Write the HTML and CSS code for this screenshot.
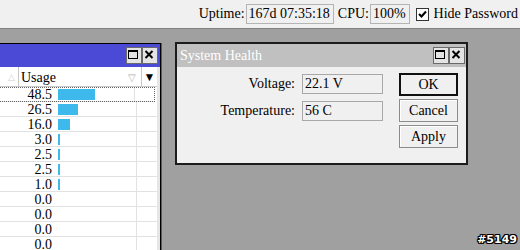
FILE: index.html
```html
<!DOCTYPE html>
<html lang="en">
<head>
  <meta charset="UTF-8" />
  <title>System Health</title>
  <link rel="stylesheet" href="styles.css">
</head>
<body>

<header class="topbar">
  <span class="lbl">Uptime:</span><span class="field">167d 07:35:18</span>
  <span class="lbl cpu-lbl">CPU:</span><span class="field">100%</span>
  <label class="check">
    <span class="box">
      <svg width="9" height="9" viewBox="0 0 9 9"><path d="M1 4 L3.5 6.5 L8 1.5" fill="none" stroke="#000" stroke-width="2"/></svg>
    </span>
    Hide Password
  </label>
</header>

<main class="desk">
  <div class="win list-win">
    <div class="titlebar blue">
      <span class="tb-btns">
        <span class="tb-btn"><svg width="14" height="15" viewBox="0 0 14 15"><rect x="2.5" y="3.5" width="9" height="8" fill="none" stroke="#000"/><rect x="2" y="3" width="10" height="2" fill="#000"/></svg></span>
        <span class="tb-btn"><svg width="14" height="15" viewBox="0 0 14 15"><path d="M3.5 4 L10.5 11 M10.5 4 L3.5 11" stroke="#000" stroke-width="2"/></svg></span>
      </span>
    </div>
    <div class="grid">
      <div class="head">
        <div class="h-name">&#9651;</div>
        <div class="h-usage">Usage<span class="filter">&#9661;</span></div>
        <div class="h-menu">&#9660;</div>
      </div>
      <div class="row focus"><div class="c-name"></div><div class="c-num">48.5</div><div class="c-bar"><span class="bar" style="width:37px"></span></div><div class="c-end"></div></div>
      <div class="row"><div class="c-name"></div><div class="c-num">26.5</div><div class="c-bar"><span class="bar" style="width:20px"></span></div><div class="c-end"></div></div>
      <div class="row"><div class="c-name"></div><div class="c-num">16.0</div><div class="c-bar"><span class="bar" style="width:12px"></span></div><div class="c-end"></div></div>
      <div class="row"><div class="c-name"></div><div class="c-num">3.0</div><div class="c-bar"><span class="bar" style="width:2px"></span></div><div class="c-end"></div></div>
      <div class="row"><div class="c-name"></div><div class="c-num">2.5</div><div class="c-bar"><span class="bar" style="width:2px"></span></div><div class="c-end"></div></div>
      <div class="row"><div class="c-name"></div><div class="c-num">2.5</div><div class="c-bar"><span class="bar" style="width:2px"></span></div><div class="c-end"></div></div>
      <div class="row"><div class="c-name"></div><div class="c-num">1.0</div><div class="c-bar"><span class="bar" style="width:2px"></span></div><div class="c-end"></div></div>
      <div class="row"><div class="c-name"></div><div class="c-num">0.0</div><div class="c-bar"></div><div class="c-end"></div></div>
      <div class="row"><div class="c-name"></div><div class="c-num">0.0</div><div class="c-bar"></div><div class="c-end"></div></div>
      <div class="row"><div class="c-name"></div><div class="c-num">0.0</div><div class="c-bar"></div><div class="c-end"></div></div>
      <div class="row"><div class="c-name"></div><div class="c-num">0.0</div><div class="c-bar"></div><div class="c-end"></div></div>
    </div>
  </div>

  <div class="win dialog">
    <div class="titlebar gray">
      <span class="title">System Health</span>
      <span class="tb-btns">
        <span class="tb-btn"><svg width="14" height="15" viewBox="0 0 14 15"><rect x="2.5" y="3.5" width="9" height="8" fill="none" stroke="#000"/><rect x="2" y="3" width="10" height="2" fill="#000"/></svg></span>
        <span class="tb-btn"><svg width="14" height="15" viewBox="0 0 14 15"><path d="M3.5 4 L10.5 11 M10.5 4 L3.5 11" stroke="#000" stroke-width="2"/></svg></span>
      </span>
    </div>
    <div class="dlg-body">
      <div class="form">
        <span class="f-lbl">Voltage:</span><span class="f-val">22.1 V</span>
        <span class="f-lbl">Temperature:</span><span class="f-val">56 C</span>
      </div>
      <div class="buttons">
        <button class="btn default">OK</button>
        <button class="btn">Cancel</button>
        <button class="btn">Apply</button>
      </div>
    </div>
  </div>

  <div class="badge">#5149</div>
</main>

</body>
</html>
```

FILE: styles.css
```css
body {
  margin: 0;
  overflow: hidden;
  font-family: "Liberation Serif", serif;
  font-size: 14px;
  color: #000;
}

.topbar {
  height: 28px;
  background: #f0f0f0;
  border-bottom: 1px solid #808080;
  display: flex;
  align-items: center;
  justify-content: flex-end;
  padding-right: 2px;
}

.topbar .lbl {
  margin-right: 1px;
}

.topbar .cpu-lbl {
  margin-left: 4px;
}

.field {
  height: 20px;
  box-sizing: border-box;
  line-height: 18px;
  padding: 0 3px 0 2px;
  border: 1px solid #b4b4b4;
  background: #f0f0f0;
}

.check {
  display: flex;
  align-items: center;
  margin-left: 6px;
  gap: 5px;
}

.check .box {
  width: 13px;
  height: 13px;
  box-sizing: border-box;
  border: 1px solid #333;
  background: #fff;
  display: flex;
  align-items: center;
  justify-content: center;
}

.desk {
  position: relative;
  height: 221px;
  background: #a0a0a0;
  display: flex;
  align-items: flex-start;
  overflow: hidden;
}

.win {
  box-sizing: border-box;
  flex: none;
}

.titlebar {
  height: 23px;
  display: flex;
  align-items: center;
  justify-content: flex-end;
}

.titlebar.blue {
  background: #4a4ad6;
  padding-right: 3px;
}

.titlebar.gray {
  background: #c0c0c0;
  justify-content: space-between;
  padding: 0 2px 0 3px;
}

.titlebar .title {
  color: #fff;
  padding-top: 1px;
}

.tb-btns {
  display: flex;
  gap: 2px;
}

.tb-btn {
  width: 14px;
  height: 15px;
  box-sizing: border-box;
  display: block;
  background: #e4e4e4;
  outline: 1px solid #6a6a6a;
}

.tb-btn svg {
  display: block;
  margin: -1px 0 0 -1px;
}

/* list window */
.list-win {
  width: 164px;
  height: 240px;
  margin: 14px 0 0 -3px;
  border: 1px solid #000;
  box-shadow: 1px 0 0 #5a5a5a;
  background: #e6e6e6;
}

.grid {
  width: 159px;
  background: #fff;
}

.head {
  height: 19px;
  display: flex;
  border-bottom: 1px solid #c8c8c8;
  line-height: 21px;
}

.h-name {
  width: 21px;
  box-sizing: border-box;
  border-right: 1px solid #c8c8c8;
  color: #d0d0d0;
  font-size: 9px;
  text-align: right;
  padding-right: 3px;
}

.h-usage {
  width: 123px;
  box-sizing: border-box;
  border-right: 1px solid #c8c8c8;
  padding-left: 2px;
  display: flex;
  justify-content: space-between;
}

.filter {
  color: #b0b0b0;
  font-size: 10px;
  padding-right: 5px;
}

.h-menu {
  flex: 1;
  font-size: 12px;
  text-align: center;
}

.row {
  height: 14px;
  display: flex;
  border-bottom: 1px solid #e2e2e2;
  line-height: 16px;
}

.row.focus {
  outline: 1px dotted #666;
  outline-offset: -1px;
  margin-right: 2px;
}

.c-name {
  width: 21px;
}

.c-num {
  width: 33px;
  text-align: right;
}

.c-bar {
  flex: 1;
  border-right: 1px solid #e2e2e2;
  padding-left: 6px;
  display: flex;
  align-items: center;
}

.bar {
  display: block;
  height: 11px;
  background: #3db9ec;
}

.c-end {
  width: 20px;
}

/* dialog */
.dialog {
  width: 293px;
  height: 123px;
  margin: 13px 0 0 14px;
  border: 2px solid #1c1c1c;
  background: #f0f0f0;
}

.dlg-body {
  display: flex;
  padding-top: 6px;
}

.form {
  display: grid;
  grid-template-columns: 118px 81px;
  grid-auto-rows: 20px;
  column-gap: 7px;
  row-gap: 7px;
  margin-top: 1px;
}

.f-lbl {
  text-align: right;
  line-height: 20px;
}

.f-val {
  box-sizing: border-box;
  border: 1px solid #a8a8a8;
  padding-left: 2px;
  line-height: 18px;
}

.buttons {
  display: flex;
  flex-direction: column;
  gap: 3px;
  margin-left: 16px;
}

.btn {
  width: 59px;
  height: 23px;
  box-sizing: border-box;
  font-family: "Liberation Serif", serif;
  font-size: 14px;
  background: #f0f0f0;
  border: 1px solid #8c8c8c;
  box-shadow: inset 1px 1px 0 #fff;
  padding: 0;
}

.btn.default {
  border: 2px solid #111;
  box-shadow: none;
}

.badge {
  position: absolute;
  right: 3px;
  bottom: 4px;
  color: #fff;
  font-family: "DejaVu Sans", sans-serif;
  font-weight: bold;
  font-size: 11px;
  text-shadow: 1px 0 #000, -1px 0 #000, 0 1px #000, 0 -1px #000, 1px 1px #000, -1px -1px #000, 1px -1px #000, -1px 1px #000;
}
```
